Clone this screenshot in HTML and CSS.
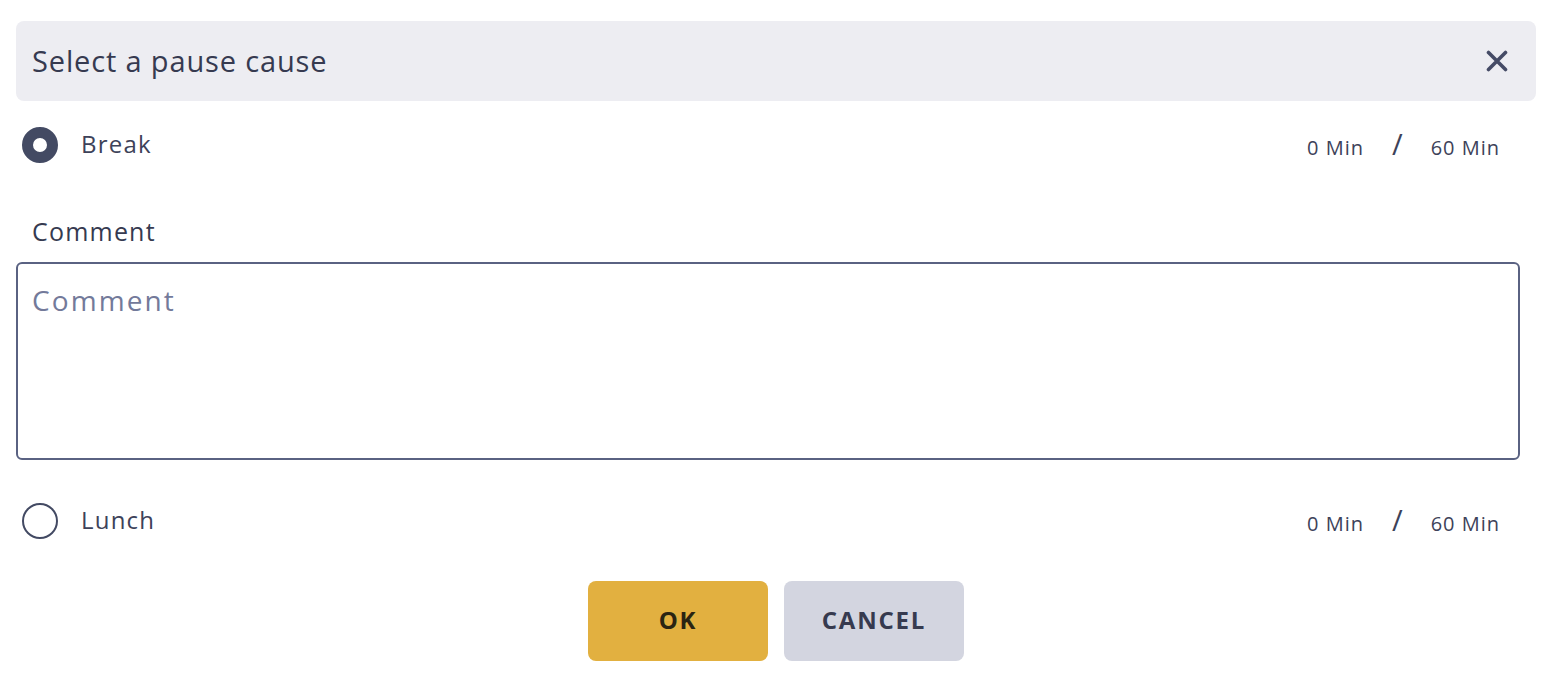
FILE: index.html
```html
<!DOCTYPE html>
<html lang="en">
<head>
<meta charset="utf-8">
<title>Select a pause cause</title>
<link rel="stylesheet" href="styles.css">
</head>
<body>
<div class="dialog">
  <header class="dialog-header">
    <h1 class="dialog-title">Select a pause cause</h1>
    <button class="close-btn" aria-label="Close">
      <svg width="22" height="22" viewBox="0 0 22 22"><path d="M2.5 2.5 L19.5 19.5 M19.5 2.5 L2.5 19.5" stroke="#454b66" stroke-width="3.6" stroke-linecap="round" fill="none"/></svg>
    </button>
  </header>
  <div class="dialog-body">
    <div class="cause-row">
      <span class="radio radio-checked"></span>
      <span class="cause-label">Break</span>
      <span class="cause-time"><span>0 Min</span><span class="slash">/</span><span>60 Min</span></span>
    </div>
    <label class="comment-label">Comment</label>
    <div class="comment-box"><span class="placeholder">Comment</span></div>
    <div class="cause-row cause-row-second">
      <span class="radio"></span>
      <span class="cause-label">Lunch</span>
      <span class="cause-time"><span>0 Min</span><span class="slash">/</span><span>60 Min</span></span>
    </div>
  </div>
  <div class="actions">
    <button class="btn btn-ok">OK</button>
    <button class="btn btn-cancel">CANCEL</button>
  </div>
</div>
</body>
</html>
```
FILE: styles.css
```css
* { box-sizing: border-box; }
html, body { margin: 0; padding: 0; background: #ffffff; }
body {
  font-family: "Open Sans", "Noto Sans", sans-serif;
  color: #3b3f56;
}
.dialog {
  padding: 21px 20px 0 16px;
}
.dialog-header {
  height: 80px;
  background: #ededf2;
  border-radius: 8px;
  display: flex;
  align-items: center;
  justify-content: space-between;
  padding: 0 28px 0 16px;
}
.dialog-title {
  margin: 0 0 2px 0;
  font-size: 29px;
  font-weight: 500;
  letter-spacing: 0.85px;
  color: #363a50;
}
.close-btn {
  border: 0;
  background: transparent;
  padding: 0;
  width: 22px;
  height: 22px;
  display: flex;
}
.dialog-body {
  padding-right: 16px;
}
.cause-row {
  height: 88px;
  display: flex;
  align-items: center;
  padding-left: 6px;
}
.cause-row-second {
  margin-top: 17px;
}
.radio {
  width: 36px;
  height: 36px;
  border-radius: 50%;
  border: 2px solid #434a63;
  flex: none;
}
.radio-checked {
  border: 11px solid #434a63;
  background: #ffffff;
}
.cause-label {
  margin-left: 23px;
  margin-bottom: 3px;
  font-size: 24px;
  font-weight: 500;
  color: #3d4259;
  letter-spacing: 1.2px;
}
.cause-time {
  margin-left: auto;
  margin-right: 20px;
  display: flex;
  align-items: center;
  font-size: 20px;
  color: #3d4259;
  letter-spacing: 1px;
  padding-top: 4px;
}
.slash {
  font-size: 29px;
  margin: -7px 27px 0 28px;
  font-weight: 400;
}
.comment-label {
  display: block;
  margin: 27px 0 16px 16px;
  height: 30px;
  line-height: 30px;
  font-size: 25px;
  font-weight: 500;
  letter-spacing: 1.2px;
  color: #363a50;
}
.comment-box {
  height: 198px;
  border: 2px solid #5a6282;
  border-radius: 6px;
  padding: 18px 14px;
}
.placeholder {
  font-size: 28px;
  color: #737a9a;
  letter-spacing: 2.1px;
  line-height: 38px;
  display: block;
  margin-top: -1px;
}
.actions {
  display: flex;
  justify-content: center;
  gap: 16px;
  margin-top: 16px;
}
.btn {
  width: 180px;
  height: 80px;
  border: 0;
  border-radius: 8px;
  padding: 0 0 3px 0;
  font-family: "Open Sans", "Noto Sans", sans-serif;
  font-size: 24px;
  font-weight: 700;
  letter-spacing: 1.8px;
}
.btn-ok {
  background: #e2b040;
  color: #2a2412;
}
.btn-cancel {
  background: #d3d5e0;
  color: #363a4f;
}
```
